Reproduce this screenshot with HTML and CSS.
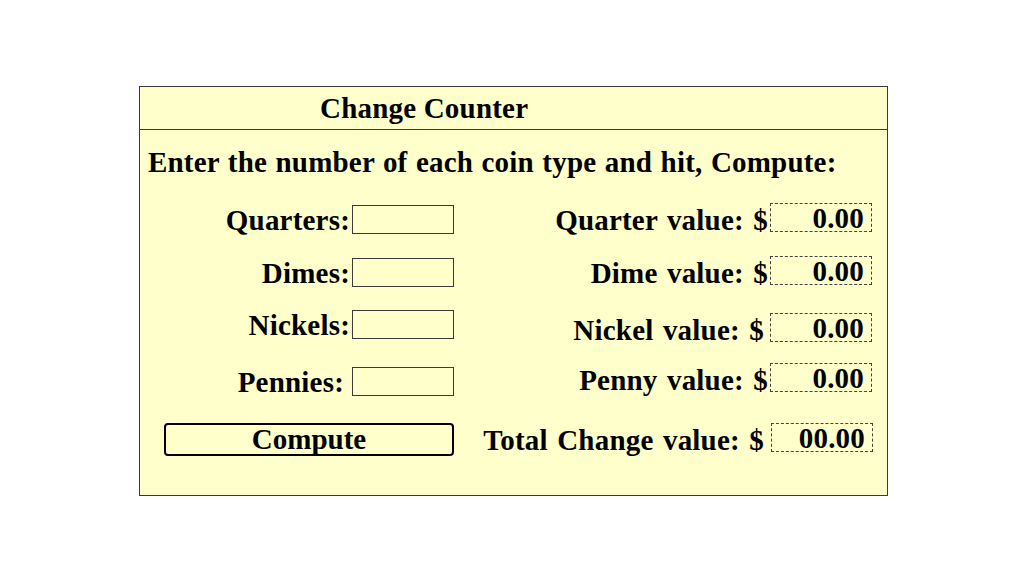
FILE: index.html
```html
<!DOCTYPE html>
<html>
<head>
<meta charset="utf-8">
<title>Change Counter</title>
<link rel="stylesheet" href="styles.css">
</head>
<body>
<div class="panel">
  <div class="header">Change Counter</div>
  <div class="intro">Enter the number of each coin type and hit, Compute:</div>
  <div class="grid">
    <label class="lbl down2">Quarters:</label>
    <input class="coin down2" type="text">
    <span class="vlbl">Quarter value: $</span>
    <span class="val">0.00</span>

    <label class="lbl down2">Dimes:</label>
    <input class="coin down2" type="text">
    <span class="vlbl">Dime value: $</span>
    <span class="val">0.00</span>

    <label class="lbl">Nickels:</label>
    <input class="coin" type="text">
    <span class="vlbl vlbl-wide down3">Nickel value: $</span>
    <span class="val down3">0.00</span>

    <label class="lbl lbl-p down1">Pennies:</label>
    <input class="coin down1" type="text">
    <span class="vlbl up3">Penny value: $</span>
    <span class="val up3">0.00</span>

    <button class="compute down1">Compute</button>
    <span class="vlbl vlbl-wide up1">Total Change value: $</span>
    <span class="val val-t up1">00.00</span>
  </div>
</div>
</body>
</html>
```
FILE: styles.css
```css
html, body {
  margin: 0;
  padding: 0;
  background: #ffffff;
}
body {
  font-family: "Liberation Serif", "Times New Roman", serif;
  font-weight: bold;
  font-size: 29px;
  letter-spacing: 0.2px;
  color: #000;
  padding-top: 86px;
  padding-left: 139px;
}
.panel {
  width: 747px;
  height: 408px;
  border: 1px solid #3a3a3a;
  background: #ffffcc;
}
.header {
  height: 42px;
  line-height: 42px;
  border-bottom: 1px solid #3a3a3a;
  padding-left: 180px;
}
.intro {
  margin-top: 16px;
  line-height: 32px;
  padding-left: 8px;
  word-spacing: 1px;
}
.grid {
  display: grid;
  grid-template-columns: 212px 102px 316px 102px;
  grid-template-rows: 53px 53px 55px 57px 58px;
  align-items: center;
  margin-top: 13px;
}
.down1 { margin-top: 2px; }
.down2 { margin-top: 4px; }
.down3 { margin-top: 6px; }
.up1 { margin-bottom: 2px; }
.up3 { margin-bottom: 6px; }
.lbl {
  text-align: right;
  padding-right: 2px;
  line-height: 30px;
}
.lbl-p { padding-right: 8px; }
.coin {
  box-sizing: border-box;
  width: 102px;
  height: 29px;
  border: 1px solid #3a3a3a;
  background: #ffffcc;
  font: inherit;
  padding: 0 4px;
}
.vlbl {
  text-align: right;
  padding-right: 2px;
  padding-top: 5px;
  line-height: 32px;
  word-spacing: 2px;
}
.vlbl-wide { padding-right: 6px; }
.val {
  box-sizing: border-box;
  width: 102px;
  height: 29px;
  border: 1px dashed #444;
  text-align: right;
  padding: 2px 7px 0 0;
  line-height: 25px;
}
.compute {
  grid-column: 1 / 3;
  margin-left: 24px;
  box-sizing: border-box;
  height: 33px;
  border: 2px solid #000;
  border-radius: 4px;
  background: #ffffcc;
  font: inherit;
  color: #000;
  line-height: 27px;
  padding: 0;
}
.val-t { margin-left: 1px; }
```
